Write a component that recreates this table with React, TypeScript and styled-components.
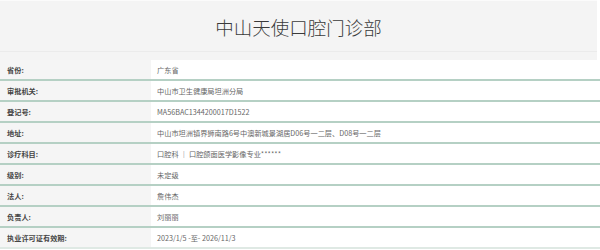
import styled, { createGlobalStyle } from "styled-components";

const GlobalStyle = createGlobalStyle`
    body {
        margin: 0;
        background: #ffffff;
        font-family: "Noto Sans CJK SC", "Noto Sans", sans-serif;
    }
`;

const Page = styled.div`
    width: 600px;
    height: 250px;
    overflow: hidden;
`;

const Header = styled.header`
    width: 597px;
    height: 60px;
    box-sizing: border-box;
    padding: 2px 0 9px;
    background: #f4f4f4;
    border-top: 1px solid #fbfbfb;
`;

const HeaderInner = styled.div`
    height: 100%;
    display: flex;
    align-items: center;
    justify-content: center;
    border-bottom: 1px solid #ebebeb;
`;

const Title = styled.h1`
    margin: 0;
    font-size: 18.5px;
    font-weight: 300;
    color: #3a3a3a;
    letter-spacing: 0;
`;

const InfoTable = styled.div`
    display: flex;
    flex-direction: column;
`;

const Row = styled.div<{ $last?: boolean }>`
    display: grid;
    grid-template-columns: 151px 1fr;
    height: 21px;
    box-sizing: border-box;
    border-bottom: 2px solid ${(p) => (p.$last ? "#dfe9e4" : "#b5d0c4")};
`;

const Label = styled.div`
    display: flex;
    align-items: center;
    padding-left: 7px;
    background: #f5f5f5;
    font-size: 7.2px;
    font-weight: 700;
    color: #444444;
`;

const Value = styled.div`
    display: flex;
    align-items: center;
    padding-left: 6px;
    background: #ffffff;
    font-size: 7.2px;
    color: #666666;
    white-space: nowrap;
`;

interface IInfo {
    label: string;
    value: string;
}

const infos: IInfo[] = [
    { label: "省份:", value: "广东省" },
    { label: "审批机关:", value: "中山市卫生健康局坦洲分局" },
    { label: "登记号:", value: "MA56BAC1344200017D1522" },
    { label: "地址:", value: "中山市坦洲镇界狮南路6号中澳新城景湖居D06号一二层、D08号一二层" },
    { label: "诊疗科目:", value: "口腔科 ｜ 口腔颌面医学影像专业******" },
    { label: "级别:", value: "未定级" },
    { label: "法人:", value: "詹伟杰" },
    { label: "负责人:", value: "刘丽丽" },
    { label: "执业许可证有效期:", value: "2023/1/5 -至- 2026/11/3" },
];

function App() {
    return (
        <Page>
            <GlobalStyle />
            <Header>
                <HeaderInner>
                    <Title>中山天使口腔门诊部</Title>
                </HeaderInner>
            </Header>
            <InfoTable>
                {infos.map((info, i) => (
                    <Row key={info.label} $last={i === infos.length - 1}>
                        <Label>{info.label}</Label>
                        <Value>{info.value}</Value>
                    </Row>
                ))}
            </InfoTable>
        </Page>
    );
}

export default App;
